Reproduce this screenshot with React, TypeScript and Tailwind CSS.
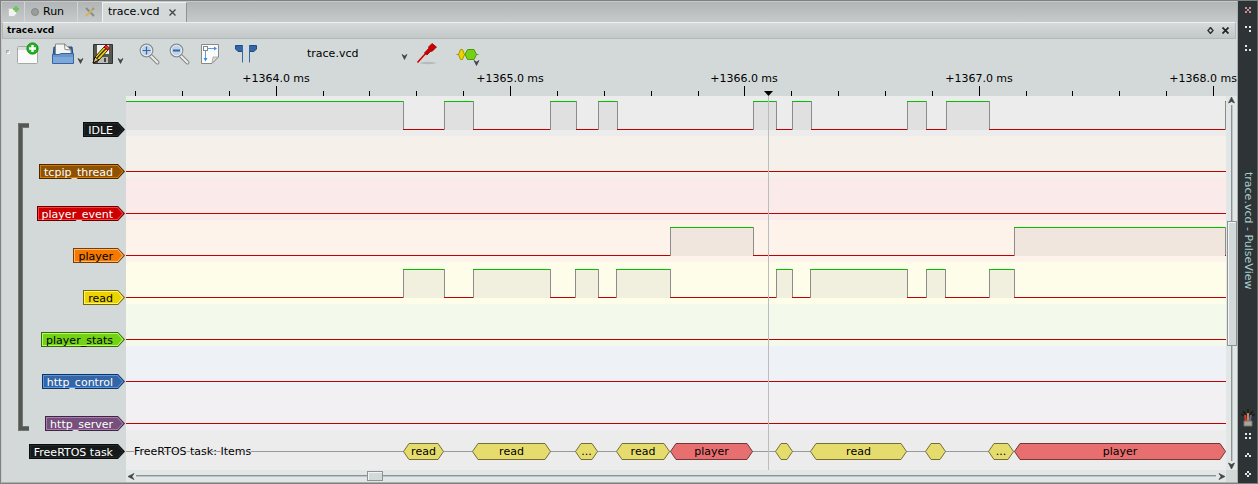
import React from "react";

type Span = [number, number];

const T0 = 126;
const T1 = 1226;
const LEN = T1 - T0;
const pct = (x: number) => `${((x - T0) / LEN) * 100}%`;

interface Channel {
  name: string;
  h: string;
  band: string;
  fill: string;
  edge: string;
  rim: string;
  text: string;
  spans: Span[];
}

const channels: Channel[] = [
  { name: "IDLE", h: "h-10", band: "bg-[#ececec]", fill: "#16191a", edge: "#0b0d0d", rim: "#242a2a", text: "text-white",
    spans: [[126, 403], [444, 473], [550, 576], [598, 617], [753, 776], [792, 811], [907, 926], [946, 989], [1225, 1226]] },
  { name: "tcpip_thread", h: "h-[42px]", band: "bg-[#f5f0ea]", fill: "#8f5202", edge: "#472901", rim: "#d67b03", text: "text-white", spans: [] },
  { name: "player_event", h: "h-[42px]", band: "bg-[#fbeaea]", fill: "#cc0000", edge: "#660000", rim: "#ff4040", text: "text-white", spans: [] },
  { name: "player", h: "h-[42px]", band: "bg-[#fef3ea]", fill: "#f57900", edge: "#7a3c00", rim: "#ffb56b", text: "text-black",
    spans: [[670, 753], [1014, 1225]] },
  { name: "read", h: "h-[42px]", band: "bg-[#fefdea]", fill: "#edd400", edge: "#766a00", rim: "#fff27a", text: "text-black",
    spans: [[403, 444], [473, 550], [575, 598], [616, 670], [776, 792], [810, 907], [926, 945], [989, 1014]] },
  { name: "player_stats", h: "h-[42px]", band: "bg-[#f3faeb]", fill: "#73d216", edge: "#39690b", rim: "#adff5c", text: "text-black", spans: [] },
  { name: "http_control", h: "h-[42px]", band: "bg-[#eef2f7]", fill: "#3465a4", edge: "#1a3252", rim: "#4e97f6", text: "text-white", spans: [] },
  { name: "http_server", h: "h-[42px]", band: "bg-[#f3f0f4]", fill: "#75507b", edge: "#3a283d", rim: "#b078b8", text: "text-white", spans: [] },
];

const tasks: { from: number; to: number; label: string }[] = [
  { from: 403, to: 444, label: "read" },
  { from: 472, to: 551, label: "read" },
  { from: 575, to: 598, label: "..." },
  { from: 616, to: 670, label: "read" },
  { from: 670, to: 753, label: "player" },
  { from: 775, to: 793, label: "" },
  { from: 810, to: 907, label: "read" },
  { from: 925, to: 946, label: "" },
  { from: 988, to: 1014, label: "..." },
  { from: 1014, to: 1226, label: "player" },
];

const majors = [
  { x: 276, label: "+1364.0 ms" },
  { x: 510, label: "+1365.0 ms" },
  { x: 744, label: "+1366.0 ms" },
  { x: 979, label: "+1367.0 ms" },
];
const minors = [135, 182, 229, 323, 369, 416, 463, 557, 604, 651, 698, 791, 838, 885, 932, 1026, 1072, 1119, 1166];

function Tag({ name, fill, edge, rim, text }: { name: string; fill: string; edge: string; rim: string; text: string }) {
  return (
    <div className={`flex h-[15px] shrink-0 text-[11px] leading-[15px] whitespace-nowrap ${text}`}>
      <span className="border-y border-l pl-px" style={{ background: rim, borderColor: edge }}>
        <span className="my-px block h-[11px] pr-1 pl-[3px] leading-[14px]" style={{ background: fill }}>{name}</span>
      </span>
      <svg className="h-[15px] w-2" viewBox="0 0 8 15" aria-hidden="true">
        <path d="M0 0H1L8 7.5L1 15H0Z" fill={edge} />
        <path d="M0 1H.8L6.6 7.5L.8 14H0Z" fill={rim} />
        <path d="M0 2H.4L5.2 7.5L.4 13H0Z" fill={fill} />
      </svg>
    </div>
  );
}

function Trace({ spans }: { spans: Span[] }) {
  const lows: Span[] = [];
  let at = T0;
  spans.forEach(([a, b]) => {
    if (a > at) lows.push([at, a]);
    at = b;
  });
  if (at < T1) lows.push([at, T1]);
  return (
    <svg className="block h-[42px] w-full" viewBox={`0 0 ${LEN} 42`} preserveAspectRatio="none" aria-hidden="true" shapeRendering="crispEdges">
      {spans.map(([a, b]) => (
        <g key={a}>
          <rect x={a - T0} y="7" width={b - a} height="29" fill="#000" opacity=".05" />
          {a > T0 && <rect x={a - T0} y="7" width="1" height="29" fill="#8c8c8a" />}
          {b < T1 && <rect x={b - T0} y="7" width="1" height="29" fill="#8c8c8a" />}
          <rect x={a - T0} y="7" width={b - a} height="1" fill="#00c000" />
        </g>
      ))}
      {lows.map(([a, b]) => (
        <rect key={a} x={a - T0} y="35" width={b - a} height="1" fill="#c00000" />
      ))}
    </svg>
  );
}

function Chevron({ className = "" }: { className?: string }) {
  return (
    <svg className={`h-2 w-[7px] ${className}`} viewBox="0 0 7 8" aria-hidden="true">
      <path d="M1 1.5L3.5 6.5L6 1.5L3.5 3Z" fill="#444" stroke="#444" strokeWidth=".7" />
    </svg>
  );
}

function Magnifier({ plus }: { plus?: boolean }) {
  return (
    <svg className="size-6" viewBox="0 0 24 24" aria-hidden="true">
      <path d="M13 14L19.5 20.500" stroke="#888a85" strokeWidth="4" strokeLinecap="round" />
      <path d="M13 14L19.5 20.500" stroke="#eeeeec" strokeWidth="2" strokeLinecap="round" />
      <circle cx="8.500" cy="8.500" r="6.3" fill="#bdd4ec" stroke="#888a85" strokeWidth="1.2" />
      <circle cx="8.500" cy="8.500" r="5.2" fill="none" stroke="#e8f0f8" />
      <path d={plus ? "M4.500 8.500H12.500M8.500 4.500V12.500" : "M5 8.500H12"} stroke="#3465a4" strokeWidth={plus ? 1.2 : 2} />
    </svg>
  );
}

function NewIcon() {
  return (
    <svg className="size-6" viewBox="0 0 24 24" aria-hidden="true">
      <rect x="1.5" y="4.5" width="20" height="17" rx="1" fill="#fafafa" stroke="#a6a8a5" />
      <path d="M2 5H21V8H2Z" fill="#ddd" />
      <circle cx="16.500" cy="6.500" r="5.6" fill="#25b325" stroke="#078c07" />
      <path d="M13 6.500H20M16.500 3V10" stroke="#fff" strokeWidth="2.4" />
    </svg>
  );
}

function OpenIcon() {
  return (
    <svg className="size-6" viewBox="0 0 24 24" aria-hidden="true">
      <path d="M3 5H21L22 14H2Z" fill="#3465a4" stroke="#204a87" />
      <path d="M4.5 14V2H13.500L20 8V14Z" fill="#f4f4f2" stroke="#888a85" />
      <path d="M13.500 2L14 7.500L20 8Z" fill="#fff" stroke="#888a85" />
      <path d="M1.5 12.5H8L10 11.5H22.5V21.5H1.5Z" fill="#6a97c9" stroke="#3465a4" />
      <path d="M2 15H22V21H2Z" fill="#7ea8d8" />
    </svg>
  );
}

function SaveIcon() {
  return (
    <svg className="size-6" viewBox="0 0 24 24" aria-hidden="true">
      <path d="M2.5 2.5H21.5V21.5H2.5Z" fill="#555753" stroke="#2e3436" />
      <path d="M6 3H18V12H6Z" fill="#eeeeec" />
      <path d="M7 15H17V21H7Z" fill="#babdb6" />
      <path d="M13 16H15V20H13Z" fill="#444" />
      <path d="M2 21L4 15L13 5L17 8L8 18Z" fill="#f4d315" stroke="#3b2b05" />
      <path d="M2 21L4 15L8 18Z" fill="#e9b96e" stroke="#111" />
      <path d="M6 16L15 6.500" stroke="#302b12" strokeWidth="1.2" />
      <path d="M13 5L15 3L18.500 6L17 8Z" fill="#ef2929" stroke="#a40000" />
    </svg>
  );
}

function FitIcon() {
  return (
    <svg className="size-6" viewBox="0 0 24 24" aria-hidden="true">
      <path d="M3.5 2.5H20.5V15L14 21.5H3.5Z" fill="#fbfbfb" stroke="#888a85" />
      <path d="M14 21L15 15H20Z" fill="#ddd" stroke="#999" strokeWidth=".7" />
      <path d="M7.5 9V17M9 6.5H17" stroke="#5b9bea" />
      <path d="M5.500 16H9.500L7.500 19.500ZM16 4.500V8.500L19 6.500Z" fill="#3b8bea" />
      <rect x="5.500" y="4.500" width="4" height="4" fill="#fff" stroke="#888" />
    </svg>
  );
}

function FlagsIcon() {
  return (
    <svg className="size-6" viewBox="0 0 24 24" aria-hidden="true">
      <path d="M1.500 3.500H8.500V9.500H4L1.500 7Z" fill="#3465a4" stroke="#204a87" />
      <path d="M22.500 3.500H15.500V9.500H20L22.500 7Z" fill="#3465a4" stroke="#204a87" />
      <path d="M8.500 3V20.500M15.500 3V20.500" stroke="#3465a4" />
    </svg>
  );
}

function ProbeIcon() {
  return (
    <svg className="size-6" viewBox="0 0 24 24" aria-hidden="true">
      <ellipse cx="12" cy="21" rx="8" ry="1.200" fill="#b5baba" />
      <path d="M1.500 20.500L10 11" stroke="#c00" strokeWidth="1.600" />
      <path d="M8.500 11L13 6L12.500 5L16 1.500L20.500 5L16 9.500L15 9L11 13Z" fill="#c00" stroke="#a00000" strokeWidth=".8" />
    </svg>
  );
}

function DecoderIcon() {
  return (
    <svg className="size-6" viewBox="0 0 24 24" aria-hidden="true">
      <path d="M1.500 12.500H23.500" stroke="#888a55" />
      <path d="M3.500 12.500L5.500 7.500H7.500L9.500 12.500L7.500 17.500H5.500Z" fill="#edd400" stroke="#a99600" />
      <path d="M10 12.500L12.500 7.500H19L21.500 12.500L19 17.500H12.500Z" fill="#73d216" stroke="#4f9a0a" />
    </svg>
  );
}

function Dots({ d, color = "#e8eaea" }: { d: string; color?: string }) {
  return (
    <svg className="h-2 w-2" viewBox="0 0 8 8" aria-hidden="true" shapeRendering="crispEdges">
      <path d={d} fill={color} />
    </svg>
  );
}

function IconButton({ label, className = "", children }: { label: string; className?: string; children: React.ReactNode }) {
  return (
    <button type="button" aria-label={label} className={`flex shrink-0 items-center ${className}`}>
      {children}
    </button>
  );
}

export default function App() {
  return (
    <div className="flex h-screen min-h-[484px] w-full overflow-hidden border border-r-[#666] border-[#808080] bg-[#d3d9d9] font-['DejaVu_Sans',sans-serif] text-[11px] text-black">
      <main className="flex min-w-0 flex-1 flex-col border-t border-l border-[#c6caca]">
        <nav className="flex h-5 shrink-0 items-stretch bg-linear-to-b from-[#b1b5b5] to-[#c6caca]" aria-label="Tabs">
          <button type="button" aria-label="New session" className="flex w-[23px] items-center justify-center border-r border-[#d3d6d6]">
            <svg className="size-3" viewBox="0 0 12 12" aria-hidden="true">
              <path d="M1.500 2.500H9.500V8L7 10.500H1.500Z" fill="#f2f2f2" stroke="#c5c8c5" />
              <path d="M9 0V6M6 3H12" stroke="#6cc45c" strokeWidth="2.500" />
            </svg>
          </button>
          <button type="button" className="flex w-[53px] items-center gap-1 border-r border-[#d3d6d6] pl-[6px]">
            <span className="size-2 rounded-full border border-[#858888] bg-[#9b9d9d]" />
            Run
          </button>
          <button type="button" aria-label="Settings" className="flex w-6 items-center justify-center">
            <svg className="size-3" viewBox="0 0 12 12" aria-hidden="true">
              <path d="M2 2L10 10" stroke="#888b8b" strokeWidth="2" />
              <path d="M10 2L2 10" stroke="#d8b456" strokeWidth="2" />
              <path d="M8 4L10 2" stroke="#999" strokeWidth="2" />
            </svg>
          </button>
          <div className="flex w-[85px] items-center gap-[10px] border-x border-t border-[#edf0f0] border-r-[#8e9292] bg-[#d3d9d9] pl-[5px]">
            <a href="#trace">trace.vcd</a>
            <button type="button" aria-label="Close tab">
              <svg className="size-[7px]" viewBox="0 0 7 7" aria-hidden="true"><path d="M.500 .500L6.500 6.500M6.500 .500L.500 6.500" stroke="#444" strokeWidth="1.300" /></svg>
            </button>
          </div>
        </nav>

        <header className="mr-px flex h-[17px] shrink-0 items-center border border-[#b2b7b7] border-t-[#edf0f0] bg-linear-to-b from-[#d6dada] to-[#c2c7c7] pr-[6px] pl-1">
          <h1 className="flex-1 text-[9px] font-bold">trace.vcd</h1>
          <div className="flex items-center gap-2">
            <button type="button" aria-label="Float">
              <svg className="size-[7px]" viewBox="0 0 7 7" aria-hidden="true"><path d="M3.500 .500L6 3.500L3.500 6.500L1 3.500Z" fill="none" stroke="#333" strokeWidth="1.400" /></svg>
            </button>
            <button type="button" aria-label="Close">
              <svg className="size-[7px]" viewBox="0 0 7 7" aria-hidden="true"><path d="M.500 .500L6.500 6.500M6.500 .500L.500 6.500" stroke="#222" strokeWidth="1.700" /></svg>
            </button>
          </div>
        </header>

        <div className="flex h-[33px] shrink-0 items-center pb-[3px]" role="toolbar">
          <span className="mb-1 ml-1 size-1 rounded-full border border-[#999] border-r-white border-b-white" />
          <IconButton label="New" className="ml-[6px] w-[35px]"><NewIcon /></IconButton>
          <IconButton label="Open" className="w-10 gap-[2px]"><OpenIcon /><Chevron className="mt-[14px]" /></IconButton>
          <IconButton label="Save" className="w-[47px] gap-[2px]"><SaveIcon /><Chevron className="mt-[14px]" /></IconButton>
          <IconButton label="Zoom in" className="w-[30px]"><Magnifier plus /></IconButton>
          <IconButton label="Zoom out" className="w-[30px]"><Magnifier /></IconButton>
          <IconButton label="Zoom to fit" className="w-9"><FitIcon /></IconButton>
          <IconButton label="Show cursors" className="w-9"><FlagsIcon /></IconButton>
          <button type="button" className="ml-[37px] flex w-[101px] items-center justify-between">
            trace.vcd
            <Chevron className="mt-[5px]" />
          </button>
          <IconButton label="Probes" className="ml-2 w-[39px]"><ProbeIcon /></IconButton>
          <IconButton label="Add decoder"><DecoderIcon /><Chevron className="mt-[18px] -ml-[6px]" /></IconButton>
        </div>

        <div className="flex min-h-0 flex-1">
          <aside className="flex w-[124px] shrink-0 pt-[25px] pr-px">
            <div className="mt-[26px] ml-4 h-[308px] w-[11px] shrink-0">
              <svg className="h-full w-full" viewBox="0 0 11 308" preserveAspectRatio="none" aria-hidden="true">
                <path d="M11 2.500H2.500V305.500H11" fill="none" stroke="#555753" strokeWidth="5" />
                <path d="M11 .5H.5V307.500H11" fill="none" stroke="#747672" />
                <path d="M11 4.500H4.500V303.500H11" fill="none" stroke="#747672" />
              </svg>
            </div>
            <div className="flex min-w-0 flex-1 flex-col">
              {channels.map((c) => (
                <div key={c.name} className={`flex shrink-0 items-end justify-end ${c.h}`}>
                  <Tag {...c} />
                </div>
              ))}
              <div className="flex h-10 shrink-0 items-center justify-end pt-px">
                <Tag name="FreeRTOS task" fill="#16191a" edge="#0b0d0d" rim="#242a2a" text="text-white" />
              </div>
            </div>
          </aside>

          <div className="flex min-w-0 flex-1 flex-col">
            <div className="relative mr-[11px] h-6 shrink-0">
              {majors.map((m) => (
                <React.Fragment key={m.x}>
                  <span className="absolute top-0 -translate-x-1/2 leading-[13px] whitespace-nowrap" style={{ left: pct(m.x) }}>{m.label}</span>
                  <span className="absolute bottom-0 h-[10px] w-px bg-black" style={{ left: pct(m.x) }} />
                </React.Fragment>
              ))}
              <span className="absolute top-0 -right-[11px] leading-[13px] whitespace-nowrap">+1368.0 ms</span>
              <span className="absolute bottom-0 h-[10px] w-px bg-black" style={{ left: pct(1213) }} />
              {minors.map((x) => (
                <span key={x} className="absolute bottom-0 h-[5px] w-px bg-black" style={{ left: pct(x) }} />
              ))}
              <svg className="absolute bottom-0 h-[5px] w-[9px] -translate-x-1" viewBox="0 0 9 5" style={{ left: pct(768) }} aria-hidden="true"><path d="M0 0H9L4.500 5Z" /></svg>
            </div>

            <div className="flex min-h-0 flex-1">
              <div className="flex min-w-0 flex-1 flex-col">
                <div className="relative flex flex-1 flex-col bg-[#ececec]">
                  {channels.map((c) => (
                    <div key={c.name} className={`flex shrink-0 items-end overflow-hidden ${c.h} ${c.band}`}>
                      <Trace spans={c.spans} />
                    </div>
                  ))}
                  <div className="relative flex h-10 shrink-0 items-center pt-[5px]">
                    <div className="absolute inset-x-0 top-[21px] h-px bg-[#999]" />
                    <span className="relative ml-2 [text-shadow:1px_0_#ececec,-1px_0_#ececec,0_1px_#ececec,0_-1px_#ececec]">FreeRTOS task: Items</span>
                    {tasks.map((t) => {
                      const w = t.to - t.from;
                      const red = t.label === "player";
                      return (
                        <div key={t.from} className="absolute top-[13px] grid h-[17px] grid-rows-[17px] place-items-center" style={{ left: pct(t.from), width: `${(w / LEN) * 100}%` }}>
                          <svg className="col-start-1 row-start-1 h-[17px] w-full" viewBox={`0 0 ${w} 17`} preserveAspectRatio="none" aria-hidden="true">
                            <path d={`M.5 8.500L6 .5H${w - 6}L${w - 0.5} 8.500L${w - 6} 16.500H6Z`} fill={red ? "#e76f6f" : "#e6dc6e"} stroke={red ? "#733737" : "#736e37"} />
                          </svg>
                          <span className="col-start-1 row-start-1 leading-[17px]">{t.label}</span>
                        </div>
                      );
                    })}
                  </div>
                  <div className="absolute inset-y-0 w-px bg-[#bcbcbc]" style={{ left: pct(768) }} />
                </div>
                <div className="flex h-3 shrink-0 items-center bg-[#e1e6e6]">
                  <svg className="ml-px h-[7px] w-2" viewBox="0 0 8 7" aria-hidden="true"><path d="M7 .5L1 3.500L7 6.500L5 3.500Z" fill="#444" stroke="#444" strokeWidth=".7" /></svg>
                  <div className="flex h-full flex-1 items-center">
                    <span className="ml-px h-[2px] flex-[231] border-t border-[#8e9292] bg-[#c0c4c4]" />
                    <span className="h-[10px] w-4 border border-[#8e9292] bg-[#d3d9d9] shadow-[inset_1px_1px_#f2f4f4]" />
                    <span className="mr-[2px] h-[2px] flex-[833] border-t border-[#8e9292] bg-[#c0c4c4]" />
                  </div>
                  <svg className="h-[7px] w-2" viewBox="0 0 8 7" aria-hidden="true"><path d="M1 .5L7 3.500L1 6.500L3 3.500Z" fill="#444" stroke="#444" strokeWidth=".7" /></svg>
                </div>
              </div>

              <div className="mb-3 flex w-[11px] shrink-0 flex-col items-center bg-[#e1e6e6]">
                <svg className="h-2 w-[7px] shrink-0" viewBox="0 0 7 8" aria-hidden="true"><path d="M.5 7L3.500 1L6.500 7L3.500 5.500Z" fill="#444" stroke="#444" strokeWidth=".7" /></svg>
                <span className="mt-px w-[2px] flex-[116] border-l border-[#8e9292] bg-[#c0c4c4]" />
                <span className="w-[10px] flex-[124] border border-[#8e9292] bg-[#d3d9d9] shadow-[inset_1px_1px_#f2f4f4]" />
                <span className="mb-px w-[2px] flex-[115] border-l border-[#8e9292] bg-[#c0c4c4]" />
                <svg className="h-2 w-[7px] shrink-0" viewBox="0 0 7 8" aria-hidden="true"><path d="M.5 1L3.500 7L6.500 1L3.500 2.500Z" fill="#444" stroke="#444" strokeWidth=".7" /></svg>
              </div>
            </div>
          </div>
        </div>
        <div className="h-px shrink-0 bg-[#a9aeae]" />
      </main>

      <aside className="flex w-5 shrink-0 flex-col items-center border-l border-[#a9aeae] bg-[#2e3436] pt-[5px]">
        <button type="button" aria-label="Close window"><Dots color="#d09090" d="M1 1H3V3H1ZM5 1H7V3H5ZM3 3H5V5H3ZM1 5H3V7H1ZM5 5H7V7H5Z" /></button>
        <button type="button" aria-label="Maximize" className="mt-[11px]"><Dots d="M1 1H3V3H1ZM5 1H7V3H5ZM5 5H7V7H5Z" /></button>
        <button type="button" aria-label="Minimize" className="mt-[11px]"><Dots d="M1 1H3V3H1ZM1 5H3V7H1ZM5 5H7V7H5Z" /></button>
        <div className="mt-[120px] text-[11px] leading-[14px] whitespace-nowrap text-[#a5cdcd] [writing-mode:vertical-rl]">trace.vcd - PulseView</div>
        <div className="flex-1" />
        <svg className="h-[18px] w-4" viewBox="0 0 16 18" aria-hidden="true">
          <path d="M1 5L4 7M3 2L6 6M8 0V5M13 2L10 6M15 5L12 7" stroke="#171b1c" strokeWidth="1.500" />
          <path d="M6 13L5 6" stroke="#d33" strokeWidth="2" />
          <path d="M8 13V4" stroke="#c84" strokeWidth="2" />
          <path d="M9.500 13L11 6" stroke="#56a" strokeWidth="2" />
          <path d="M4 12H12V17H4Z" fill="#aaa698" stroke="#77756c" />
        </svg>
        <button type="button" aria-label="Sticky" className="mt-[5px]"><Dots d="M1 1H3V3H1ZM5 1H7V3H5ZM1 5H3V7H1ZM5 5H7V7H5Z" /></button>
        <button type="button" aria-label="Shade" className="mt-[11px]"><Dots d="M3 2H5V4H3ZM1 4H3V6H1ZM5 4H7V6H5Z" /></button>
        <button type="button" aria-label="Menu" className="mt-[11px] mb-[5px]"><Dots d="M3 1H5V3H3ZM1 3H3V5H1ZM5 3H7V5H5ZM3 5H5V7H3Z" /></button>
      </aside>
    </div>
  );
}
